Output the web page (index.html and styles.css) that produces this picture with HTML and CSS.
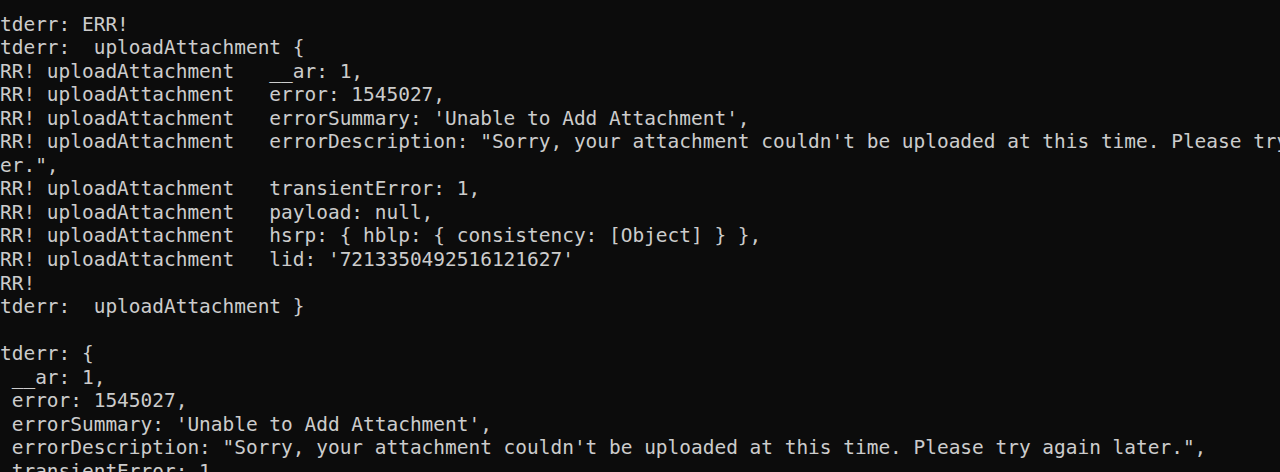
FILE: index.html
```html
<!DOCTYPE html>
<html lang="en">
<head>
<meta charset="utf-8">
<title>Terminal</title>
<link rel="stylesheet" href="styles.css">
</head>
<body>
<main class="terminal">
<div class="line">tderr: ERR!</div>
<div class="line">tderr:  uploadAttachment {</div>
<div class="line">RR! uploadAttachment   __ar: 1,</div>
<div class="line">RR! uploadAttachment   error: 1545027,</div>
<div class="line">RR! uploadAttachment   errorSummary: 'Unable to Add Attachment',</div>
<div class="line">RR! uploadAttachment   errorDescription: "Sorry, your attachment couldn't be uploaded at this time. Please try</div>
<div class="line">er.",</div>
<div class="line">RR! uploadAttachment   transientError: 1,</div>
<div class="line">RR! uploadAttachment   payload: null,</div>
<div class="line">RR! uploadAttachment   hsrp: { hblp: { consistency: [Object] } },</div>
<div class="line">RR! uploadAttachment   lid: '7213350492516121627'</div>
<div class="line">RR!</div>
<div class="line">tderr:  uploadAttachment }</div>
<div class="line"> </div>
<div class="line">tderr: {</div>
<div class="line"> __ar: 1,</div>
<div class="line"> error: 1545027,</div>
<div class="line"> errorSummary: 'Unable to Add Attachment',</div>
<div class="line"> errorDescription: "Sorry, your attachment couldn't be uploaded at this time. Please try again later.",</div>
<div class="line"> transientError: 1,</div>
</main>
</body>
</html>
```
FILE: styles.css
```css
html, body {
  margin: 0;
  padding: 0;
  background: #0c0c0c;
  height: 472px;
  overflow: hidden;
}

.terminal {
  display: flex;
  flex-direction: column;
  padding-top: 12.5px;
  font-family: "DejaVu Sans Mono", "Liberation Mono", monospace;
  font-size: 19.47px;
  line-height: 23.55px;
  color: #cccccc;
}

.line {
  height: 23.55px;
  white-space: pre;
  flex: none;
}
```
